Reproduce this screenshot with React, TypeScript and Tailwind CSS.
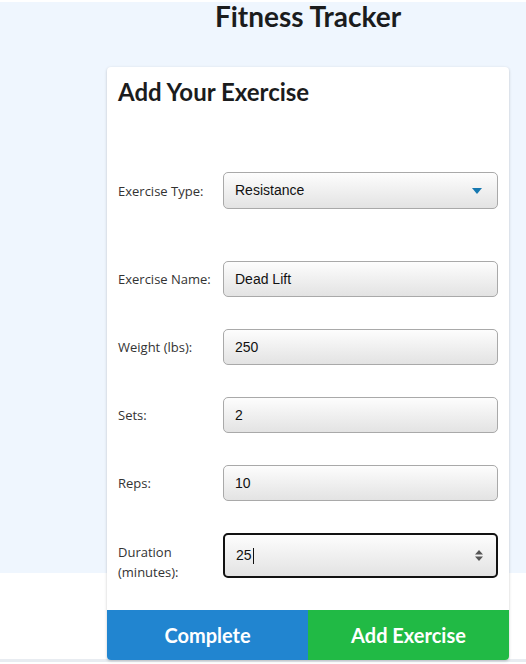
import React from "react";

const fields = [
  { label: "Exercise Name:", value: "Dead Lift" },
  { label: "Weight (lbs):", value: "250" },
  { label: "Sets:", value: "2" },
  { label: "Reps:", value: "10" },
];

const labelCls =
  "w-[105px] shrink-0 text-[13px] leading-[20px] text-[#333] font-['Open_Sans',sans-serif]";
const boxCls =
  "flex-1 flex items-center px-[11px] rounded-[5px] bg-linear-to-b from-[#fdfdfd] to-[#e3e3e3] text-[14px] text-[#111] font-['Liberation_Sans',Arial,sans-serif]";

export default function App() {
  return (
    <div className="w-[526px] h-[664px] bg-white overflow-hidden">
      {/* top strip */}
      <div className="h-[3px] bg-white" />
      <div className="h-px bg-[#d6dad6]" />

      <div className="h-[571px] bg-[#eff6fe]">
        <div className="ml-[107px] w-[402px]">
          <h1 className="-mt-[2px] text-center text-[28px] leading-[28px] font-bold text-[#1b1c1d] font-['Lato',sans-serif]">
            Fitness Tracker
          </h1>

          <div className="relative z-10 mt-[37px] bg-white rounded-[4px] shadow-[0_1px_3px_rgba(0,0,0,0.22)] flex flex-col">
            <div className="px-[11px] pt-[10px]">
              <h2 className="text-[24px] leading-[30px] font-bold text-[#1b1c1d] font-['Lato',sans-serif]">
                Add Your Exercise
              </h2>

              {/* exercise type */}
              <div className="mt-[65px] flex items-center">
                <span className={labelCls}>Exercise Type:</span>
                <div className={`${boxCls} h-[37px] border border-[#a9a9a9] justify-between`}>
                  <span>Resistance</span>
                  <svg width="10" height="6" viewBox="0 0 10 6" className="mr-[4px]">
                    <path d="M0 0h10L5 6z" fill="#1678b0" />
                  </svg>
                </div>
              </div>

              <div className="mt-[52px] flex flex-col gap-[32px]">
                {fields.map((f) => (
                  <div key={f.label} className="flex items-center">
                    <span className={labelCls}>{f.label}</span>
                    <div className={`${boxCls} h-[36px] border border-[#a9a9a9]`}>{f.value}</div>
                  </div>
                ))}

                <div className="flex items-start h-[45px]">
                  <span className={`${labelCls} pt-[9px]`}>
                    Duration
                    <br />
                    (minutes):
                  </span>
                  <div className={`${boxCls} h-[45px] border-2 border-[#121212] justify-between`}>
                    <span className="flex items-center">
                      25
                      <span className="ml-px inline-block w-px h-[16px] bg-[#111]" />
                    </span>
                    <svg width="8" height="11" viewBox="0 0 8 11" className="mr-[2px]">
                      <path d="M0 4.5h8L4 0z M0 6.5h8L4 11z" fill="#555" />
                    </svg>
                  </div>
                </div>
              </div>
            </div>

            <div className="mt-[32px] flex h-[50px] rounded-b-[4px] overflow-hidden text-white text-[20px] font-bold font-['Lato',sans-serif]">
              <button className="flex-1 bg-[#2185d0]">Complete</button>
              <button className="flex-1 bg-[#21ba45]">Add Exercise</button>
            </div>
          </div>
        </div>
      </div>

      <div className="h-[86px] bg-white" />
      <div className="h-[3px] bg-[#e8ecf1]" />
    </div>
  );
}
